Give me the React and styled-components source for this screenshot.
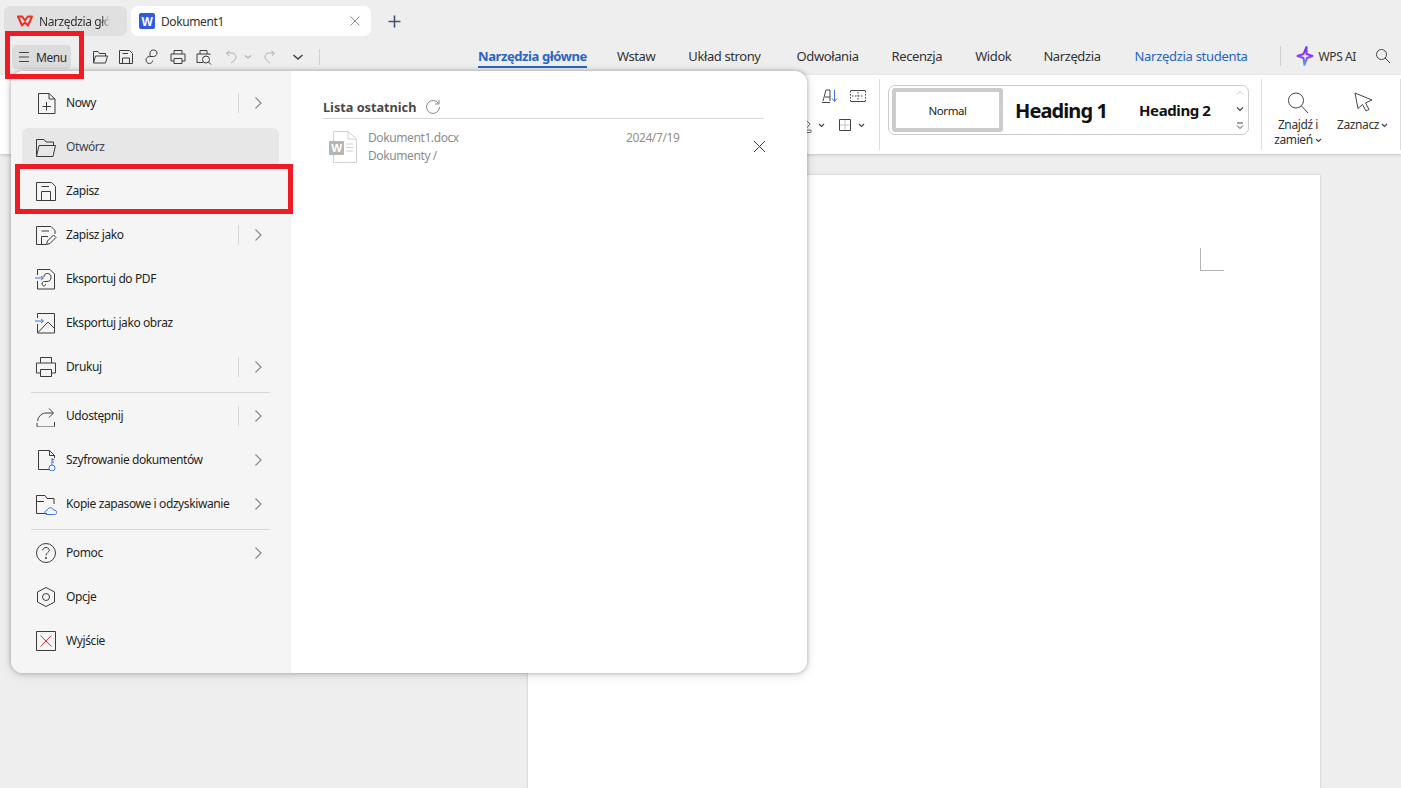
import React from 'react';
import styled, { createGlobalStyle } from 'styled-components';

const GlobalStyle = createGlobalStyle`
  html, body {
    margin: 0;
    height: 100%;
    overflow: hidden;
    background: #eeeeee;
  }
  body {
    font-family: "Noto Sans", "Open Sans", sans-serif;
    font-size: 12px;
    letter-spacing: -0.4px;
    color: #2b2b2b;
  }
`;

const Wrapper = styled.div`
  position: relative;
  width: 1401px;
  height: 788px;
  overflow: hidden;
  display: flex;
  flex-direction: column;
  background: #eeeeee;
`;

/* tabs */
const TabBar = styled.div`
  display: flex;
  align-items: center;
  height: 30px;
  margin-top: 6px;
  padding-left: 4px;
  gap: 4px;
`;
const Tab = styled.div`
  display: flex;
  align-items: center;
  gap: 6px;
  height: 30px;
  box-sizing: border-box;
  width: ${(p) => (p.$active ? '240px' : '123px')};
  padding-left: ${(p) => (p.$active ? '8px' : '13px')};
  padding-right: ${(p) => (p.$active ? '10px' : '17px')};
  border-radius: 7px;
  background: ${(p) => (p.$active ? '#ffffff' : '#e0e0e0')};
`;
const TabText = styled.span`
  flex: 1;
  white-space: nowrap;
  overflow: hidden;
  color: #333333;
  ${(p) => p.$fade && 'mask-image: linear-gradient(to right, #000 88%, transparent 100%);'}
`;
const AddTab = styled.div`
  display: flex;
  margin-left: 13px;
`;

/* toolbar + ribbon tabs */
const TopRow = styled.div`
  display: flex;
  align-items: center;
  height: 39px;
  padding-left: 12px;
`;
const MenuButton = styled.div`
  display: flex;
  align-items: center;
  gap: 7px;
  width: 59px;
  height: 24px;
  margin-top: 3px;
  box-sizing: border-box;
  padding-left: 7px;
  border-radius: 4px;
  background: #dcdcdc;
`;
const QuickBar = styled.div`
  display: flex;
  align-items: center;
  margin-left: 20px;
  margin-top: 3px;
  width: 229px;
  gap: 8px;
`;
const QuickSep = styled.div`
  width: 1px;
  height: 16px;
  background: #d0d0d0;
  margin-left: 8px;
`;
const Nav = styled.nav`
  display: flex;
  align-items: center;
  gap: 33px;
  margin-left: 158px;
  margin-top: 1px;
`;
const NavItem = styled.div`
  position: relative;
  margin-left: ${(p) => p.$shift || 0}px;
  font-size: 13px;
  white-space: nowrap;
  color: ${(p) => (p.$active || p.$accent ? '#2a64c4' : '#333333')};
  font-weight: ${(p) => (p.$active ? 700 : 400)};
  ${(p) => p.$accent && 'letter-spacing: -0.3px;'}
  ${(p) =>
    p.$active &&
    `&::after {
      content: '';
      position: absolute;
      left: 0;
      right: 0;
      bottom: -3px;
      height: 2px;
      background: #2a64c4;
    }`}
`;
const RightTools = styled.div`
  display: flex;
  align-items: center;
  margin-left: 32px;
  margin-top: 1px;
`;
const VSep = styled.div`
  width: 1px;
  height: 20px;
  background: #d0d0d0;
`;
const StarIcon = styled.svg`
  margin-left: 15px;
`;
const AiLabel = styled.span`
  margin: 0 19px 0 5px;
  font-size: 12px;
  color: #333333;
`;

/* ribbon */
const Ribbon = styled.div`
  display: flex;
  justify-content: flex-end;
  align-items: flex-start;
  height: 79px;
  box-sizing: border-box;
  padding-top: 4px;
  background: #ffffff;
  box-shadow: 0 1px 3px rgba(0, 0, 0, 0.18);
`;
const SmallGrid = styled.div`
  display: flex;
  flex-direction: column;
  align-items: flex-end;
  gap: 9px;
  margin-right: 12px;
  padding-top: 7px;
`;
const SmallRow = styled.div`
  display: flex;
  align-items: center;
  height: 20px;
  gap: ${(p) => p.$gap}px;
  margin-right: ${(p) => p.$end || 0}px;
`;
const IconCell = styled.div`
  display: flex;
  align-items: center;
  gap: 4px;
`;
const RibbonSep = styled.div`
  width: 1px;
  height: 71px;
  background: #dddddd;
`;
const StylesBox = styled.div`
  display: flex;
  align-items: center;
  width: 361px;
  height: 50px;
  box-sizing: border-box;
  margin: 6px 12px 0 8px;
  padding: 0 3px;
  border: 1px solid #cccccc;
  border-radius: 7px;
`;
const NormalStyle = styled.div`
  display: flex;
  align-items: center;
  justify-content: center;
  width: 111px;
  height: 44px;
  box-sizing: border-box;
  border: 4px solid #cccccc;
  border-radius: 3px;
  font-size: 11.5px;
  color: #222222;
`;
const HeadingOne = styled.div`
  margin-left: 12px;
  width: 124px;
  font-size: 20px;
  font-weight: 700;
  letter-spacing: -0.9px;
  color: #111111;
`;
const HeadingTwo = styled.div`
  width: 91px;
  font-size: 15px;
  font-weight: 700;
  letter-spacing: -0.4px;
  color: #111111;
`;
const StylesScroll = styled.div`
  display: flex;
  flex-direction: column;
  justify-content: space-between;
  align-items: center;
  height: 40px;
  margin-left: 6px;
`;
const BigTool = styled.div`
  display: flex;
  flex-direction: column;
  align-items: center;
  width: ${(p) => p.$w}px;
  box-sizing: border-box;
  padding: 13px ${(p) => p.$end || 0}px 0 0;
  line-height: 15px;
  font-size: 12px;
  color: #333333;
  white-space: nowrap;
`;
const BigToolLabel = styled.div`
  margin-top: 3px;
  text-align: center;
`;
const Caret = styled.svg`
  margin-left: 2px;
  vertical-align: 1px;
`;

/* document */
const DocArea = styled.div`
  flex: 1;
  min-height: 0;
  padding: 21px 0 0 528px;
`;
const Page = styled.div`
  display: flex;
  justify-content: flex-end;
  align-items: flex-start;
  width: 792px;
  height: 700px;
  box-sizing: border-box;
  padding: 73px 96px 0 0;
  background: #ffffff;
  box-shadow: 0 0 2px rgba(0, 0, 0, 0.25);
`;
const CropMark = styled.div`
  width: 23px;
  height: 22px;
  border-left: 1px solid #b5b5b5;
  border-bottom: 1px solid #b5b5b5;
`;

/* file menu */
const MenuPanel = styled.div`
  position: absolute;
  left: 11px;
  top: 71px;
  display: flex;
  width: 796px;
  height: 602px;
  overflow: hidden;
  background: #ffffff;
  border-radius: 12px;
  box-shadow: 0 0 4px rgba(0, 0, 0, 0.3), 0 2px 12px rgba(0, 0, 0, 0.12);
`;
const MenuLeft = styled.div`
  flex: 0 0 280px;
  box-sizing: border-box;
  padding: 13px 12px 0 11px;
  background: #f5f5f5;
`;
const MenuItem = styled.div`
  display: flex;
  align-items: center;
  height: 38px;
  margin-bottom: 6px;
  padding-left: 13px;
  border-radius: 6px;
  background: ${(p) => (p.$hover ? '#e7e7e7' : 'transparent')};
  color: ${(p) => (p.$hover ? '#3d4450' : '#1f1f1f')};
`;
const ItemLabel = styled.span`
  flex: 1;
  margin: 0 0 2px 9px;
  white-space: nowrap;
`;
const ItemSep = styled.div`
  width: 1px;
  height: 20px;
  background: #d6d6d6;
  margin-right: 12px;
`;
const ItemArrow = styled.div`
  display: flex;
  width: 14px;
  margin-right: 14px;
`;
const MenuDivider = styled.div`
  height: 1px;
  margin: 0 9px 4px;
  background: #d8d8d8;
`;
const MenuRight = styled.div`
  flex: 1;
  min-width: 0;
  padding: 26px 43px 0 32px;
`;
const RecentHead = styled.div`
  display: flex;
  align-items: center;
  gap: 9px;
  height: 20px;
  padding-bottom: 1px;
  border-bottom: 1px solid #d9d9d9;
  font-size: 12.7px;
  font-weight: 700;
  letter-spacing: 0;
  color: #4a4a4a;
`;
const RecentRow = styled.div`
  display: flex;
  align-items: flex-start;
  margin-right: -4px;
  padding: 12px 0 0 6px;
  color: #8c8c8c;
`;
const RecentIcon = styled.div`
  display: flex;
  width: 39px;
`;
const RecentName = styled.div`
  width: 258px;
  line-height: 18px;
  margin-top: -2px;
`;
const RecentDate = styled.div`
  width: 127px;
  line-height: 18px;
  margin-top: -2px;
  color: #9a8f86;
`;
const RecentClose = styled.div`
  display: flex;
  margin-top: 9px;
`;

/* red annotation frames drawn over the screenshot */
const Marker = styled.div`
  position: absolute;
  box-sizing: border-box;
  left: ${(p) => p.$x}px;
  top: ${(p) => p.$y}px;
  width: ${(p) => p.$w}px;
  height: ${(p) => p.$h}px;
  border: 5px solid #ed1c24;
`;

const Ico = ({ size = 22, color = '#3b3b3b', children }) => (
  <svg width={size} height={size} viewBox={`0 0 ${size} ${size}`} fill="none" stroke={color} strokeWidth="1">
    {children}
  </svg>
);

const BLUE = '#3d73e0';

const menuIcons = {
  new: (
    <>
      <path d="M3.5 1.5H14L20 7V21.5H3.5Z" />
      <path d="M14 1.5V7H20" />
      <path d="M11.5 10V18.5M7.5 14.5H16" />
    </>
  ),
  open: (
    <>
      <path d="M1.5 20.5V3.5H9L11 6H18.5V9" />
      <path d="M1.5 20.5L4 9.5H20.5L18 20.5Z" />
    </>
  ),
  save: (
    <>
      <path d="M1.5 2.5H16.5L20.5 6.5V20.5H1.5Z" />
      <path d="M6.5 6.5H14" />
      <path d="M6.5 20.5V11.5H15.5V20.5" />
    </>
  ),
  saveAs: (
    <>
      <path d="M11 20.5H1.5V2.5H16L20 6.5V10" />
      <path d="M6.5 20.5V12.5H13M6.5 7H14" />
      <path d="M11.5 20.5L12.5 17L18.5 11L21 13.5L15 19.5Z" />
    </>
  ),
  pdf: (
    <>
      <path d="M2.5 7V1.5H15L19.5 6V21H2.5V13" />
      <path d="M9 9V8C9 6.5 10.5 5.5 12.5 5.5C14.5 5.5 16 7 16 9.5C16 12 14.5 13.5 12 13.5H9.5C8 13.5 7 14.5 7 16C7 17 8 18 9 18C10 18 10.5 17 10.5 16" />
      <path d="M0 10H8M6 8L8.5 10L6 12" stroke={BLUE} />
    </>
  ),
  image: (
    <>
      <path d="M2.5 6V1.5H19.5V21H2.5V12" />
      <path d="M3 20.5L13 10L20 17" />
      <path d="M0 9H8M6 7L8.5 9L6 11" stroke={BLUE} />
    </>
  ),
  print: (
    <>
      <path d="M5.5 7V1.5H16.5V7" />
      <path d="M5.5 17H1.5V7H20.5V17H16.5" />
      <path d="M5.5 13.5H16.5V20.5H5.5Z" />
    </>
  ),
  share: (
    <>
      <path d="M2 18V21C2 21.5 2.5 22 3 22H18.5C19 22 19.5 21.5 19.5 21V17" />
      <path d="M2.5 16C3.5 10.5 7.5 8 11 8H18" />
      <path d="M14 3.5L18.5 8L14 12.5" />
    </>
  ),
  lock: (
    <>
      <path d="M14 20.5H3.5V1.5H14.5L19.5 6.5V9" />
      <path d="M14.5 1.5V6.5H19.5" />
      <path d="M17 9V16M17 10.5H19.5M17 13H19" stroke={BLUE} />
      <circle cx="17" cy="19" r="3" stroke={BLUE} />
    </>
  ),
  backup: (
    <>
      <path d="M12 20.5H1.5V2.5H10L12 5.5H19V11" />
      <path d="M1.5 8.5H9" />
      <path d="M12 21.5C9.5 21.5 9 17.5 12 17.5C12.5 14 18 14 18.5 17C22 16.5 23 21.5 19.5 21.5Z" stroke={BLUE} />
    </>
  ),
  help: (
    <>
      <circle cx="11" cy="11" r="9.5" />
      <path d="M7.8 8.5C7.8 6.5 9.2 5.5 11 5.5C12.8 5.5 14.2 6.7 14.2 8.3C14.2 10.5 11 10.7 11 13.5" />
      <circle cx="11" cy="16" r="0.6" fill="#3b3b3b" />
    </>
  ),
  options: (
    <>
      <path d="M11 1.5L19.5 6V16L11 20.5L2.5 16V6Z" />
      <circle cx="11" cy="11" r="3.5" />
    </>
  ),
  exit: (
    <>
      <path d="M1.5 1.5H20.5V20.5H1.5Z" />
      <path d="M5.5 5.5L16.5 16.5M16.5 5.5L5.5 16.5" stroke="#d2334f" />
    </>
  ),
};

const menuGroups = [
  [
    { icon: 'new', label: 'Nowy', arrow: true, sep: true },
    { icon: 'open', label: 'Otwórz', hover: true },
    { icon: 'save', label: 'Zapisz' },
    { icon: 'saveAs', label: 'Zapisz jako', arrow: true, sep: true },
    { icon: 'pdf', label: 'Eksportuj do PDF' },
    { icon: 'image', label: 'Eksportuj jako obraz' },
    { icon: 'print', label: 'Drukuj', arrow: true, sep: true },
  ],
  [
    { icon: 'share', label: 'Udostępnij', arrow: true, sep: true },
    { icon: 'lock', label: 'Szyfrowanie dokumentów', arrow: true },
    { icon: 'backup', label: 'Kopie zapasowe i odzyskiwanie', arrow: true },
  ],
  [
    { icon: 'help', label: 'Pomoc', arrow: true },
    { icon: 'options', label: 'Opcje' },
    { icon: 'exit', label: 'Wyjście' },
  ],
];

const navItems = [
  { label: 'Wstaw', shift: -3 },
  { label: 'Układ strony' },
  { label: 'Odwołania', shift: 3 },
  { label: 'Recenzja' },
  { label: 'Widok' },
  { label: 'Narzędzia', shift: -1 },
];

const TinyCaret = ({ color = '#444444' }) => (
  <Caret width="7" height="5" viewBox="0 0 7 5" fill="none" stroke={color} strokeWidth="1.2">
    <path d="M1 1L3.5 3.5L6 1" />
  </Caret>
);

const Quick = ({ w = 18, children }) => (
  <svg width={w} height="18" viewBox={`0 0 ${w} 18`} fill="none" stroke="#3d3d3d" strokeWidth="1">
    {children}
  </svg>
);

const App = () => (
  <Wrapper>
    <GlobalStyle />
    <TabBar>
      <Tab>
        <svg width="16" height="12" viewBox="0 0 16 12" fill="none" stroke="#ec2f23" strokeWidth="2" strokeLinejoin="round">
          <path d="M1 1.5H5.2L8 5.5L10.8 1.5H15L11 10.5L8 7.5L5 10.5Z" />
        </svg>
        <TabText $fade>Narzędzia główne</TabText>
      </Tab>
      <Tab $active>
        <svg width="16" height="16" viewBox="0 0 16 16">
          <rect width="16" height="16" rx="2" fill="#2f5be0" />
          <text x="8" y="12.5" textAnchor="middle" fontSize="12" fontWeight="700" fill="#ffffff" fontFamily="Liberation Sans">
            W
          </text>
        </svg>
        <TabText>Dokument1</TabText>
        <svg width="12" height="12" viewBox="0 0 12 12" fill="none" stroke="#8c8c8c" strokeWidth="1">
          <path d="M1.5 1.5L10.5 10.5M10.5 1.5L1.5 10.5" />
        </svg>
      </Tab>
      <AddTab>
        <svg width="13" height="13" viewBox="0 0 13 13" fill="none" stroke="#45516e" strokeWidth="1.6">
          <path d="M6.5 0.5V12.5M0.5 6.5H12.5" />
        </svg>
      </AddTab>
    </TabBar>

    <TopRow>
      <MenuButton>
        <svg width="10" height="12" viewBox="0 0 10 12" fill="none" stroke="#444444" strokeWidth="1">
          <path d="M0 1.5H10M0 6H10M0 10.5H10" />
        </svg>
        <span>Menu</span>
      </MenuButton>
      <QuickBar>
        <Quick>
          <path d="M2.5 15V3.5H7L8.5 5.5H14.5V8" />
          <path d="M2.5 15L4.5 8H16.5L14.5 15Z" />
        </Quick>
        <Quick>
          <path d="M2.5 2.5H12.5L15.5 5.5V15.5H2.5Z" />
          <path d="M5.5 5.5H11M5.5 15.5V10H12.5V15.5" />
        </Quick>
        <Quick>
          <path d="M7 8V5C7 3.2 8.5 2 10.5 2C12.5 2 14 3.3 14 5C14 7 12.5 8.5 10.5 8.5H6.5C4.5 8.5 3 10 3 12C3 14 4.5 15.5 6.5 15.5C8.5 15.5 9.5 14 9.5 12.5" />
        </Quick>
        <Quick>
          <path d="M5 6V2.5H13V6" />
          <path d="M5 13H2V6H16V13H13" />
          <path d="M5 10.5H13V15.5H5Z" />
        </Quick>
        <Quick>
          <path d="M8 14.5H2V6H15V7M5 6V2.5H12V6" />
          <circle cx="11" cy="11.5" r="3.5" />
          <path d="M13.5 14L16 16.5" />
        </Quick>
        <Quick w={32}>
          <g stroke="#b0b0b0">
            <path d="M8 8L5.5 5L8.5 3" />
            <path d="M6 5H11C14 5 15 7.5 15 9C15 11 13 13 10 15" />
            <path d="M24 7.5L27 10L30 7.5" strokeWidth="1.3" />
          </g>
        </Quick>
        <Quick w={24}>
          <g stroke="#b0b0b0">
            <path d="M11 8L13.5 5L10.5 3" />
            <path d="M13 5H8C5 5 4 7.5 4 9C4 11 6 13 9 15" />
          </g>
        </Quick>
        <Quick w={10}>
          <path d="M0.5 7L5 11L9.5 7" strokeWidth="1.4" />
        </Quick>
        <QuickSep />
      </QuickBar>
      <Nav>
        <NavItem $active>Narzędzia główne</NavItem>
        {navItems.map((item) => (
          <NavItem key={item.label} $shift={item.shift}>
            {item.label}
          </NavItem>
        ))}
        <NavItem $accent $shift={1}>
          Narzędzia studenta
        </NavItem>
      </Nav>
      <RightTools>
        <VSep />
        <StarIcon width="18" height="22" viewBox="0 0 18 22">
          <defs>
            <linearGradient id="wpsAi" x1="0" y1="0" x2="0" y2="1">
              <stop offset="0" stopColor="#7a35f0" />
              <stop offset="0.55" stopColor="#8a3df5" />
              <stop offset="1" stopColor="#35b4f0" />
            </linearGradient>
          </defs>
          <path d="M10.5 2L7.5 9L1.5 11L7.5 13L8.5 20L11 13L16.5 11L10.5 9Z" fill="none" stroke="url(#wpsAi)" strokeWidth="2" strokeLinejoin="round" />
        </StarIcon>
        <AiLabel>WPS AI</AiLabel>
        <svg width="16" height="16" viewBox="0 0 16 16" fill="none" stroke="#444444" strokeWidth="1">
          <circle cx="6.5" cy="6.5" r="5" />
          <path d="M10 10L15 15" />
        </svg>
      </RightTools>
    </TopRow>

    <Ribbon>
      <SmallGrid>
        <SmallRow $gap={10}>
          <svg width="18" height="16" viewBox="0 0 18 16" fill="none" stroke="#444444" strokeWidth="1">
            <path d="M2 13L5 2H9V13M1 14.5H9M4 9H9" />
            <path d="M13.5 2V13M11 10.5L13.5 13.5L16 10.5" stroke={BLUE} />
          </svg>
          <svg width="18" height="14" viewBox="0 0 18 14" fill="none" stroke="#444444" strokeWidth="1">
            <path d="M1.5 1.5H16.5M1.5 12.5H16.5" />
            <path d="M1.5 2V12M16.5 2V12M9 3V11M3 7H15" strokeDasharray="1.5 1.5" />
          </svg>
        </SmallRow>
        <SmallRow $gap={13} $end={2}>
          <IconCell>
            <svg width="14" height="16" viewBox="0 0 14 16" fill="none" stroke="#777777" strokeWidth="1">
              <path d="M2 8L7 2L12 7L8 12H3Z" />
              <path d="M8 13H13V15.5H8Z" />
            </svg>
            <TinyCaret />
          </IconCell>
          <IconCell>
            <svg width="14" height="14" viewBox="0 0 14 14" fill="none" stroke="#444444" strokeWidth="1">
              <path d="M7 1.5V12.5M1.5 7H12.5" stroke="#c4c4c4" />
              <path d="M1.5 1.5H12.5V12.5H1.5Z" />
            </svg>
            <TinyCaret />
          </IconCell>
        </SmallRow>
      </SmallGrid>
      <RibbonSep />
      <StylesBox>
        <NormalStyle>Normal</NormalStyle>
        <HeadingOne>Heading 1</HeadingOne>
        <HeadingTwo>Heading 2</HeadingTwo>
        <StylesScroll>
          <svg width="8" height="6" viewBox="0 0 8 6" fill="none" stroke="#c8c8c8" strokeWidth="1">
            <path d="M1 4.5L4 1.5L7 4.5" />
          </svg>
          <svg width="8" height="6" viewBox="0 0 8 6" fill="none" stroke="#444444" strokeWidth="1.2">
            <path d="M1 1.5L4 4.5L7 1.5" />
          </svg>
          <svg width="8" height="8" viewBox="0 0 8 8" fill="none" stroke="#444444" strokeWidth="1">
            <path d="M1 1H7M1 3.5L4 6.5L7 3.5" />
          </svg>
        </StylesScroll>
      </StylesBox>
      <RibbonSep />
      <BigTool $w={72}>
        <svg width="24" height="22" viewBox="0 0 24 22" fill="none" stroke="#444444" strokeWidth="1">
          <circle cx="10" cy="8.5" r="7.5" />
          <path d="M15.5 14L22 21" />
        </svg>
        <BigToolLabel>
          Znajdź i
          <br />
          zamień
          <TinyCaret />
        </BigToolLabel>
      </BigTool>
      <BigTool $w={66} $end={9}>
        <svg width="20" height="22" viewBox="0 0 20 22" fill="none" stroke="#444444" strokeWidth="1">
          <path d="M2 1L19 8L12.5 11L16 17.5L13 19L9.5 12.5L5 16.5Z" />
        </svg>
        <BigToolLabel>
          Zaznacz
          <TinyCaret />
        </BigToolLabel>
      </BigTool>
      <RibbonSep />
    </Ribbon>

    <DocArea>
      <Page>
        <CropMark />
      </Page>
    </DocArea>

    <MenuPanel>
      <MenuLeft>
        {menuGroups.map((group, idx) => (
          <React.Fragment key={group[0].icon}>
            {idx > 0 && <MenuDivider />}
            {group.map((item) => (
              <MenuItem key={item.label} $hover={item.hover}>
                <Ico>{menuIcons[item.icon]}</Ico>
                <ItemLabel>{item.label}</ItemLabel>
                {item.sep && <ItemSep />}
                {item.arrow && (
                  <ItemArrow>
                    <svg width="14" height="14" viewBox="0 0 14 14" fill="none" stroke="#8a8a8a" strokeWidth="1.2">
                      <path d="M4.5 1.5L10 7L4.5 12.5" />
                    </svg>
                  </ItemArrow>
                )}
              </MenuItem>
            ))}
          </React.Fragment>
        ))}
      </MenuLeft>
      <MenuRight>
        <RecentHead>
          Lista ostatnich
          <svg width="16" height="16" viewBox="0 0 16 16" fill="none" stroke="#8a8a8a" strokeWidth="1">
            <path d="M13.5 4.5A6.5 6.5 0 1 0 14.5 8" />
            <path d="M14 1V5H10" />
          </svg>
        </RecentHead>
        <RecentRow>
          <RecentIcon>
            <svg width="28" height="32" viewBox="0 0 28 32" fill="none">
              <path d="M4.5 0.5H19L27.5 8V31.5H4.5Z" stroke="#d0d0d0" />
              <path d="M19 0.5V8H27.5" stroke="#d0d0d0" />
              <rect x="0" y="10" width="15" height="14" rx="1" fill="#b5b5b5" />
              <text x="7.5" y="21" textAnchor="middle" fontSize="11.5" fontWeight="700" fill="#ffffff" fontFamily="Liberation Sans">
                W
              </text>
              <path d="M17 13H24M17 16.5H24M17 20H24" stroke="#d0d0d0" />
            </svg>
          </RecentIcon>
          <RecentName>
            Dokument1.docx
            <br />
            Dokumenty /
          </RecentName>
          <RecentDate>2024/7/19</RecentDate>
          <RecentClose>
            <svg width="13" height="13" viewBox="0 0 13 13" fill="none" stroke="#3d3d3d" strokeWidth="1">
              <path d="M1 1L12 12M12 1L1 12" />
            </svg>
          </RecentClose>
        </RecentRow>
      </MenuRight>
    </MenuPanel>

    <Marker $x={5} $y={31} $w={79} $h={48} />
    <Marker $x={15} $y={164} $w={278} $h={50} />
  </Wrapper>
);

export default App;
